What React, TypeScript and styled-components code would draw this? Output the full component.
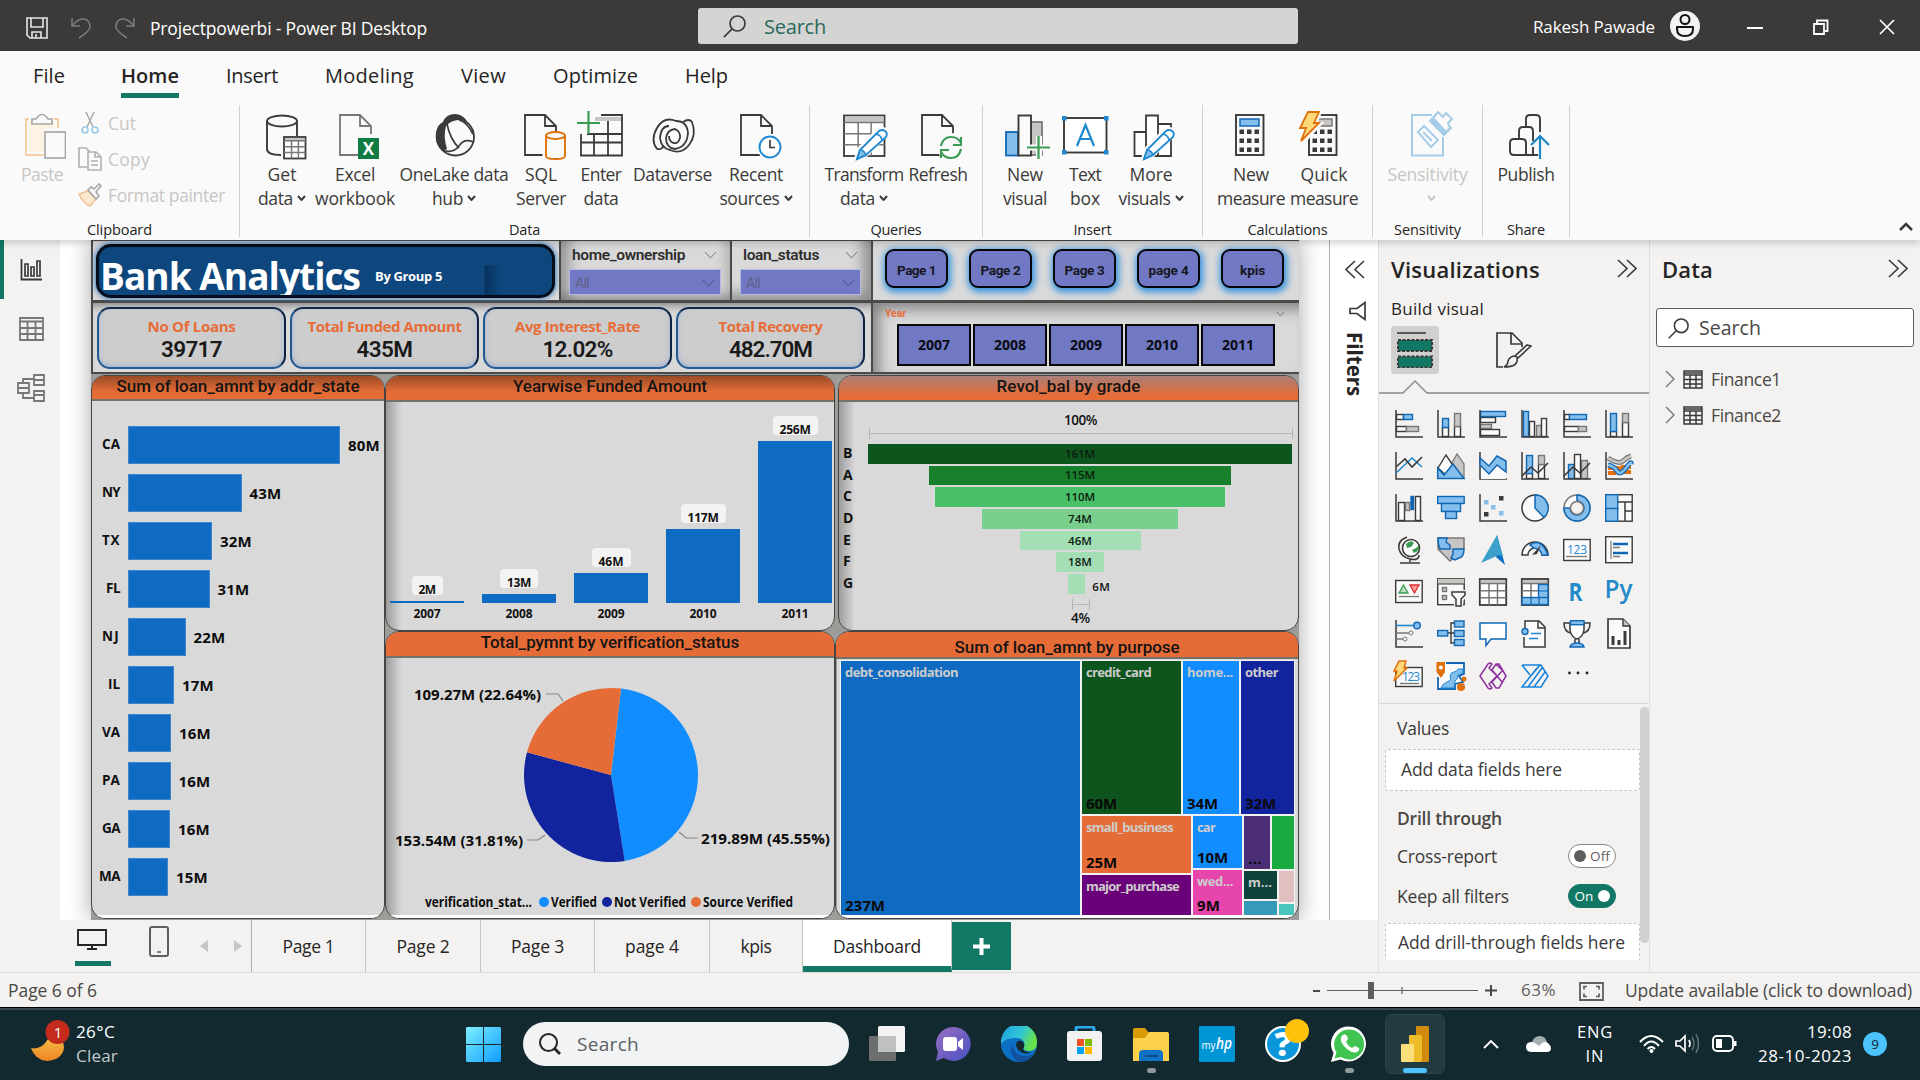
import React, { useLayoutEffect, useRef, useState } from 'react';
import styled, { createGlobalStyle, css } from 'styled-components';

const UI = `"Open Sans", "Noto Sans", sans-serif`;
const DIN = `Roboto, "Liberation Sans", sans-serif`;
const GREEN = '#117865';
const ORANGE = '#e66c37';
const BLUE = '#0f6bc1';
const PURPLE = '#7179c4';

const Global = createGlobalStyle`
  * { box-sizing: border-box; }
  body { margin: 0; background: #f3f2f1; font-family: ${UI}; overflow: hidden; }
  svg { display: block; flex: none; }
`;

/* ---------- text ---------- */

interface LabelProps { $size?: number; $weight?: number; $color?: string; $font?: string; $line?: number; $up?: number }
const Label = styled.span<LabelProps>`
  display: inline-block;
  flex: none;
  white-space: pre;
  font-family: ${p => p.$font ?? UI};
  font-size: ${p => p.$size ?? 18}px;
  font-weight: ${p => p.$weight ?? 400};
  color: ${p => p.$color ?? '#252423'};
  line-height: ${p => p.$line ?? 24}px;
  ${p => p.$up && css`margin-top: ${-p.$up}px;`}
`;

interface TxtProps { w?: number; s?: number; b?: number; c?: string; f?: string; lh?: number; up?: number; children: string }
/** Text tracked in or out so that it fills a given width. */
function Txt({ w, s, b, c, f, lh, up, children }: TxtProps) {
  const ref = useRef<HTMLSpanElement>(null);
  const [track, setTrack] = useState<number | undefined>();
  useLayoutEffect(() => {
    if (!w || !ref.current || track !== undefined) return;
    const range = document.createRange();
    range.selectNodeContents(ref.current);
    setTrack((w + 1 - range.getBoundingClientRect().width) / children.length);
  }, [w, children, track]);
  return (
    <Label ref={ref} $size={s} $weight={b} $color={c} $font={f} $line={lh} $up={up} style={{ letterSpacing: track }}>
      {children}
    </Label>
  );
}

/* ---------- shell ---------- */

const App_ = styled.div`
  width: 1920px;
  height: 1080px;
  display: flex;
  flex-direction: column;
  background: #f3f2f1;
`;
const TitleBar = styled.header`
  height: 51px;
  flex: none;
  display: grid;
  grid-template-columns: 698px 600px 1fr;
  background: #3b3a38;
`;
const TitleLeft = styled.div`
  display: flex;
  align-items: center;
  padding: 4px 0 0 26px;
`;
const QuickIcon = styled.div<{ $w: number }>`
  width: ${p => p.$w}px;
`;
const TitleSearch = styled.div`
  margin: 8px 0 7px;
  display: flex;
  align-items: center;
  gap: 18px;
  padding-left: 25px;
  border-radius: 3px;
  background: #d4d4d2;
`;
const TitleRight = styled.div`
  display: flex;
  align-items: center;
  padding-left: 235px;
`;
const Avatar = styled.div`
  width: 30px;
  height: 30px;
  margin: 0 47px 0 15px;
`;
const WinIcon = styled.div`
  width: 66px;
  padding-top: 3px;
`;

const Tabs = styled.nav`
  height: 54px;
  flex: none;
  display: flex;
  gap: 47px;
  padding: 12px 0 0 33px;
  background: #fafafa;
  position: relative;
  z-index: 6;
`;
const Tab = styled.div<{ $active?: boolean }>`
  height: 35px;
  ${p => p.$active && css`margin-left: 9px; border-bottom: 5px solid ${GREEN};`}
`;

const Ribbon = styled.section`
  height: 135px;
  flex: none;
  display: flex;
  position: relative;
  z-index: 5;
  background: #fafafa;
  box-shadow: 0 2px 8px rgba(0, 0, 0, 0.22);
`;
const Group = styled.div<{ $w: number }>`
  width: ${p => p.$w}px;
  height: 132px;
  border-right: 1px solid #d2d0ce;
  display: flex;
  flex-direction: column;
  justify-content: space-between;
`;
const GroupBody = styled.div<{ $pad?: number }>`
  display: flex;
  padding-left: ${p => p.$pad ?? 0}px;
`;
const GroupName = styled.div`
  display: flex;
  justify-content: center;
  height: 16px;
`;
const Btn = styled.div<{ $w: number }>`
  width: ${p => p.$w}px;
  display: flex;
  flex-direction: column;
  align-items: center;
  padding-top: 7px;
`;
const BtnText = styled.div`
  margin-top: 2px;
  display: flex;
  flex-direction: column;
  align-items: center;
`;
const Line = styled.div`
  display: flex;
  align-items: center;
  gap: 4px;
`;
const ClipList = styled.div`
  display: flex;
  flex-direction: column;
  padding: 0 0 0 2px;
`;
const ClipItem = styled.div`
  height: 36px;
  display: flex;
  align-items: center;
  gap: 6px;
`;
const Collapse = styled.div`
  margin: 117px 7px 0 auto;
`;

const Workspace = styled.main`
  height: 732px;
  flex: none;
  display: grid;
  grid-template-columns: 1378px 271px 271px;
`;
const LeftArea = styled.div`
  display: flex;
  flex-direction: column;
`;
const Upper = styled.div`
  height: 680px;
  display: grid;
  grid-template-columns: 60px 1269px 49px;
`;
const Rail = styled.aside`
  background: #f3f2f1;
`;
const RailItem = styled.div<{ $active?: boolean }>`
  height: 59px;
  display: flex;
  align-items: center;
  justify-content: center;
  padding-left: 2px;
  ${p => p.$active && css`border-left: 4px solid ${GREEN}; padding: 0 3px 0 0;`}
`;
const Canvas = styled.div`
  background: #fff;
  padding-left: 31px;
  overflow: hidden;
`;
const FilterPane = styled.aside`
  border-left: 1px solid #b3b0ad;
  background: #fff;
  display: flex;
  flex-direction: column;
  align-items: flex-start;
  padding: 20px 0 0 15px;
`;
const FunnelIcon = styled.div`
  margin: 22px 0 0 4px;
`;
const VerticalName = styled.div`
  writing-mode: vertical-rl;
  margin: 11px 0 0 -3px;
`;

/* ---------- report page ---------- */

const Report = styled.div`
  width: 1208px;
  height: 680px;
  display: flex;
  flex-direction: column;
  background: #9d9c99;
  box-shadow: 0 0 22px rgba(0, 0, 0, 0.35);
`;
const TopRow = styled.div`
  height: 62px;
  display: grid;
  grid-template-columns: 468px 171px 141px 428px;
`;
const Tile = styled.div<{ $shade?: string }>`
  border: 2px solid #4a4a49;
  border-top-width: 1px;
  border-right-width: 0;
  background: #d9d9d9;
  ${p => p.$shade && css`box-shadow: ${p.$shade};`}
`;
const Banner = styled.div`
  margin: 3px 4px 0 3px;
  height: 54px;
  display: flex;
  align-items: center;
  gap: 15px;
  padding: 10px 0 0 1px;
  border: 3px solid #050d18;
  border-radius: 15px;
  background: linear-gradient(90deg, transparent 385px, rgba(0, 15, 40, 0.38) 386px, transparent 402px) no-repeat 0 100% / 100% 30px, #0d477e;
  box-shadow: 0 0 5px 1px #3c7db8;
  overflow: hidden;
`;
const SlicerHead = styled.div`
  height: 28px;
  display: flex;
  align-items: center;
  justify-content: space-between;
  padding: 0 13px 0 11px;
`;
const Dropdown = styled.div<{ $r: number }>`
  height: 26px;
  margin: 0 ${p => p.$r}px 0 8px;
  display: flex;
  align-items: center;
  justify-content: space-between;
  padding: 2px 5px 0 5px;
  background: ${PURPLE};
  border: 1px solid #b4b8e6;
`;
const NavRow = styled.div`
  display: flex;
  gap: 21px;
  padding: 8px 0 0 12px;
`;
const NavBtn = styled.div`
  width: 63px;
  height: 39px;
  display: flex;
  align-items: center;
  justify-content: center;
  padding-top: 2px;
  border: 2px solid #04060c;
  border-radius: 9px;
  background: ${PURPLE};
  box-shadow: 1px 2px 7px 2px #3391e0;
`;
const KpiRow = styled.div`
  height: 72px;
  display: grid;
  grid-template-columns: 780px 428px;
`;
const Kpis = styled.div`
  display: flex;
  gap: 4px;
  padding: 4px 0 0 4px;
`;
const Kpi = styled.div`
  width: 189px;
  height: 62px;
  display: flex;
  flex-direction: column;
  align-items: center;
  padding-top: 6px;
  border: 2px solid;
  border-color: #12284a #0e2140 #225b95 #1f578f;
  border-radius: 13px;
  background: #cdcdcd;
  box-shadow: inset 0 -2px 5px rgba(120, 150, 215, 0.45);
`;
const YearHead = styled.div`
  height: 21px;
  display: flex;
  align-items: center;
  justify-content: space-between;
  padding: 1px 14px 0 12px;
`;
const YearRow = styled.div`
  display: flex;
  gap: 2px;
  padding-left: 24px;
`;
const YearBtn = styled.div`
  width: 74px;
  height: 42px;
  display: flex;
  align-items: center;
  justify-content: center;
  border: 2px solid #07070c;
  background: ${PURPLE};
`;
const Charts = styled.div`
  flex: 1;
  display: flex;
  padding-top: 1px;
`;
const RightCharts = styled.div`
  display: flex;
  flex-direction: column;
`;
const ChartRow = styled.div<{ $gap: number }>`
  display: flex;
  gap: ${p => p.$gap}px;
`;
const Panel = styled.div<{ $w: number; $h: number }>`
  width: ${p => p.$w}px;
  height: ${p => p.$h}px;
  flex: none;
  border: 1px solid #454544;
  border-radius: 14px;
  background: #d9d9d9;
  overflow: hidden;
  display: flex;
  flex-direction: column;
`;
const PanelHead = styled.div<{ $h: number; $pt?: number; $shade?: boolean; $cool?: boolean }>`
  height: ${p => p.$h}px;
  flex: none;
  display: flex;
  justify-content: center;
  padding-top: ${p => p.$pt ?? 0}px;
  background: ${ORANGE};
  border-bottom: 2px solid #77716c;
  ${p => p.$shade && css`background-image: linear-gradient(180deg, rgba(60, 35, 20, 0.45), transparent 16px);`}
  ${p => p.$cool && css`background-image: linear-gradient(180deg, rgba(110, 145, 185, 0.5), transparent 20px);`}
`;
const PanelBody = styled.div<{ $shade?: boolean }>`
  flex: 1;
  min-height: 0;
  ${p => p.$shade && css`background: linear-gradient(90deg, rgba(0, 0, 0, 0.28), transparent 16px);`}
`;
const WhiteFoot = styled.div`
  height: 3px;
  flex: none;
  background: #fff;
`;

const BarList = styled.div`
  display: flex;
  flex-direction: column;
  gap: 10px;
  padding-top: 25px;
`;
const BarRow = styled.div`
  height: 38px;
  display: grid;
  grid-template-columns: 28px 1fr;
  column-gap: 8px;
  align-items: center;
`;
const BarCat = styled.div`
  display: flex;
  justify-content: flex-end;
`;
const BarTrack = styled.div`
  display: flex;
  align-items: center;
  gap: 8px;
`;
const Bar = styled.div`
  height: 38px;
  background: ${BLUE};
  border: 1px solid #3f86cb;
`;
const Columns = styled.div`
  height: 223px;
  display: flex;
  gap: 18px;
  padding: 0 0 0 4px;
`;
const Column = styled.div`
  width: 74px;
  flex: none;
  display: flex;
  flex-direction: column;
  align-items: center;
  justify-content: flex-end;
`;
const Pill = styled.div`
  height: 19px;
  padding: 1px 7px 0;
  margin-bottom: 6px;
  border-radius: 4px;
  background: #f3f3f3;
`;
const ColBar = styled.div`
  width: 74px;
  flex: none;
  background: ${BLUE};
`;
const ColCat = styled.div`
  height: 22px;
  flex: none;
  display: flex;
  align-items: center;
`;
const Funnel = styled.div`
  display: flex;
  flex-direction: column;
  align-items: center;
  padding-top: 10px;
`;
const Shift = styled.div`
  display: flex;
  margin-left: 24px;
`;
const Steps = styled.div`
  width: 100%;
  margin: 5px 0 3px;
`;
const Step = styled.div`
  height: 21.7px;
  display: grid;
  grid-template-columns: 22px 430px;
  padding-left: 4px;
`;
const StepMid = styled.div`
  display: flex;
  justify-content: center;
  padding-top: 0;
`;
const StepBar = styled.div<{ $c: string }>`
  height: 19.5px;
  display: flex;
  align-items: center;
  justify-content: center;
  background: ${p => p.$c};
`;
const Outside = styled.div`
  width: 0;
  padding-left: 7px;
`;
const Bracket = styled.div<{ $w: number }>`
  width: ${p => p.$w}px;
  height: 11px;
  border: solid #b3b1ae;
  border-width: 0 1px;
  background: linear-gradient(#b9b7b4, #b9b7b4) no-repeat 0 5px / 100% 1px;
`;

const TreeMap = styled.div`
  height: 257px;
  display: flex;
  gap: 2px;
  padding: 2px 4px 0 4px;
  border-left: 1px solid #999;
`;
const TCol = styled.div<{ $w?: number }>`
  ${p => (p.$w ? css`width: ${p.$w}px; flex: none;` : css`flex: 1; min-width: 0;`)}
  display: flex;
  flex-direction: column;
  gap: 2px;
`;
const TRow = styled.div<{ $h?: number }>`
  ${p => (p.$h ? css`height: ${p.$h}px; flex: none;` : css`flex: 1; min-height: 0;`)}
  display: flex;
  gap: 2px;
`;
const Cell = styled.div<{ $c: string; $w?: number; $h?: number }>`
  ${p => p.$w && css`width: ${p.$w}px; flex: none;`}
  ${p => p.$h && css`height: ${p.$h}px; flex: none;`}
  ${p => !p.$w && !p.$h && css`flex: 1; min-width: 0; min-height: 0;`}
  display: flex;
  flex-direction: column;
  justify-content: space-between;
  padding: 1px 0 1px 4px;
  background: ${p => p.$c};
  outline: 1px solid rgba(255, 255, 255, 0.65);
  overflow: hidden;
`;

/* ---------- page tabs and status ---------- */

const PageTabs = styled.div`
  height: 52px;
  display: flex;
  background: #f3f2f1;
`;
const ViewToggles = styled.div`
  width: 252px;
  display: flex;
  align-items: flex-start;
  padding: 6px 0 0 75px;
  border-right: 1px solid #b3b0ad;
`;
const DesktopToggle = styled.div`
  width: 36px;
  height: 40px;
  display: flex;
  justify-content: center;
  padding: 2px 2px 0 0;
  margin-right: 38px;
  background: linear-gradient(${GREEN}, ${GREEN}) no-repeat 0 100% / 100% 5px;
`;
const PageArrow = styled.div<{ $m: number }>`
  margin: 14px 0 0 ${p => p.$m}px;
`;
const PageTab = styled.div<{ $w: number; $active?: boolean }>`
  width: ${p => p.$w}px;
  display: flex;
  justify-content: center;
  padding-top: 14px;
  border-right: 1px solid #c8c6c4;
  ${p => p.$active && css`background: #fff; border-bottom: 6px solid ${GREEN};`}
`;
const AddPage = styled.div`
  width: 59px;
  height: 48px;
  margin-top: 2px;
  display: flex;
  align-items: center;
  justify-content: center;
  background: ${GREEN};
`;
const Status = styled.footer`
  height: 36px;
  flex: none;
  display: flex;
  align-items: center;
  padding: 0 8px;
  border-top: 1px solid #e1dfdd;
  border-bottom: 1px solid #000;
  background: #f3f2f1;
`;
const ZoomArea = styled.div`
  margin: 0 24px 0 auto;
`;
const FitIcon = styled.div`
  margin: 3px 21px 0 23px;
`;

/* ---------- right panes ---------- */

const Pane = styled.aside`
  border-left: 1px solid #e1dfdd;
  background: #f3f2f1;
  overflow: hidden;
`;
const PaneHead = styled.div`
  height: 53px;
  display: flex;
  align-items: center;
  justify-content: space-between;
  padding: 4px 12px 0 12px;
`;
const BuildName = styled.div`
  padding: 4px 0 0 12px;
  height: 33px;
`;
const Modes = styled.div`
  height: 54px;
  display: flex;
  gap: 51px;
  padding-left: 12px;
`;
const Mode = styled.div<{ $on?: boolean }>`
  width: 48px;
  height: 48px;
  display: flex;
  align-items: center;
  justify-content: center;
  border-radius: 3px;
  ${p => p.$on && css`background: #d2d0ce;`}
`;
const IconGrid = styled.div`
  height: 310px;
  display: grid;
  grid-template-columns: repeat(6, 28px);
  grid-auto-rows: 28px;
  gap: 14px;
  padding: 16px 0 0 16px;
  border-bottom: 1px solid #d9d7d5;
`;
const Fields = styled.div`
  display: grid;
  grid-template-columns: 255px 9px;
  padding: 3px 0 0 6px;
`;
const Thumb = styled.div`
  height: 236px;
  border-radius: 5px;
  background: #d2d0ce;
`;
const FieldName = styled.div<{ $h: number; $pt: number }>`
  height: ${p => p.$h}px;
  padding: ${p => p.$pt}px 0 0 12px;
`;
const Well = styled.div<{ $cut?: boolean }>`
  height: ${p => (p.$cut ? 37 : 42)}px;
  display: flex;
  align-items: center;
  padding: 0 0 2px ${p => (p.$cut ? 12 : 15)}px;
  border: 1px dashed #c8c6c4;
  border-radius: 3px;
  background: #fff;
  ${p => p.$cut && css`border-bottom: 0; padding-top: 2px; border-radius: 3px 3px 0 0;`}
`;
const SwitchRow = styled.div`
  height: 40px;
  display: flex;
  align-items: center;
  justify-content: space-between;
  padding: 0 24px 0 12px;
`;
const Switch = styled.div<{ $on?: boolean }>`
  width: 48px;
  height: 24px;
  display: flex;
  align-items: center;
  justify-content: center;
  gap: 4px;
  border-radius: 12px;
  border: 1px solid ${p => (p.$on ? GREEN : '#8a8886')};
  background: ${p => (p.$on ? GREEN : '#fff')};
`;
const Knob = styled.div<{ $on?: boolean }>`
  width: 12px;
  height: 12px;
  border-radius: 50%;
  background: ${p => (p.$on ? '#fff' : '#605e5c')};
`;
const DataSearch = styled.div`
  height: 39px;
  margin: 15px 6px 14px;
  display: flex;
  align-items: center;
  gap: 10px;
  padding: 1px 0 0 11px;
  border: 1px solid #605e5c;
  border-radius: 3px;
  background: #fff;
`;
const TableRow = styled.div`
  height: 36px;
  display: flex;
  align-items: center;
  padding-left: 15px;
  gap: 8px;
`;

/* ---------- taskbar ---------- */

const Taskbar = styled.footer`
  height: 72px;
  flex: none;
  display: flex;
  align-items: center;
  background: #12292f;
  border-top: 2px solid #3a474c;
  padding-bottom: 2px;
`;
const Weather = styled.div`
  width: 466px;
  display: flex;
  gap: 5px;
  padding-left: 30px;
`;
const Stack = styled.div<{ $align?: string }>`
  display: flex;
  flex-direction: column;
  align-items: ${p => p.$align ?? 'flex-start'};
`;
const TaskSearch = styled.div`
  width: 326px;
  height: 44px;
  margin: 0 5px 0 22px;
  display: flex;
  align-items: center;
  gap: 16px;
  padding-left: 16px;
  border-radius: 22px;
  background: #f1f3f5;
`;
const TaskIcon = styled.div<{ $on?: boolean }>`
  width: 60px;
  height: 60px;
  margin: 0 3px;
  display: flex;
  align-items: center;
  justify-content: center;
  position: relative;
  ${p => p.$on && css`background: #223a41; border: 1px solid #2d444a; border-radius: 7px;`}
`;
const RunMark = styled.span<{ $wide?: boolean }>`
  position: absolute;
  bottom: ${p => (p.$wide ? 0 : 1)}px;
  width: ${p => (p.$wide ? 24 : 9)}px;
  height: 5px;
  border-radius: 3px;
  background: ${p => (p.$wide ? '#4cc2ff' : '#8f999c')};
`;
const Tray = styled.div`
  display: flex;
  align-items: center;
  margin-left: 35px;
`;
const TraySlot = styled.div<{ $w: number; $end?: boolean }>`
  width: ${p => p.$w}px;
  flex: none;
  display: flex;
  justify-content: ${p => (p.$end ? 'flex-end' : 'center')};
`;
const Count = styled.div`
  width: 24px;
  height: 24px;
  margin-left: 11px;
  display: flex;
  align-items: center;
  justify-content: center;
  border-radius: 50%;
  background: #4cc2ff;
`;

/* ---------- icons ---------- */

const K = '#3b3a39', B = '#1267b4', L = '#83beec', G = '#797775', C = '#c8c6c4', W = '#fafafa', GR = '#3a9b52';

function Svg({ w, h, vb, children }: { w: number; h: number; vb?: string; children: React.ReactNode }) {
  return <svg width={w} height={h} viewBox={vb ?? `0 0 ${w} ${h}`} fill="none">{children}</svg>;
}
const Chev = ({ w = 9, h = 6, c = K, sw = 2 }: { w?: number; h?: number; c?: string; sw?: number }) => (
  <Svg w={w} h={h}><path d={`M1 1L${w / 2} ${h - 1}L${w - 1} 1`} stroke={c} strokeWidth={sw} /></Svg>
);
const Lens = ({ s, c = K }: { s: number; c?: string }) => (
  <Svg w={s} h={s} vb="0 0 23 23"><circle cx="14.5" cy="8.5" r="7.5" stroke={c} strokeWidth="1.7" /><path d="M9 14L.8 22.2" stroke={c} strokeWidth="1.7" /></Svg>
);
const Page = ({ x = 8, c = K }: { x?: number; c?: string }) => (
  <path d={`M${x + 31} 22V14L${x + 20} 3H${x}V43H${x + 19}M${x + 20} 3V14H${x + 31}`} fill={W} stroke={c} strokeWidth="1.8" />
);
const Pencil = () => (
  <g><path d="M16 47l3-10 20-20q4-1 6 1t1 5L26 43z" fill="#fff" stroke={W} strokeWidth="4" /><path d="M17 47l3-9 19-19q3-2 6 0t1 6L26 43z" fill="#fff" stroke="#1e88d0" strokeWidth="1.8" /><path d="M17 47l3-9q4 0 6 5z" fill={L} stroke="#1e88d0" strokeWidth="1.5" /><path d="M36 22q5 1 6 6" stroke="#1e88d0" strokeWidth="1.5" /></g>
);
const Grid = ({ x, y, w, h, c = K }: { x: number; y: number; w: number; h: number; c?: string }) => (
  <g><rect x={x} y={y} width={w} height={h} fill="#fff" stroke={c} strokeWidth="1.8" /><rect x={x + 1} y={y + 1} width={w - 2} height={h * 0.15} fill={C} />
    <path d={`M${x} ${y + h * 0.17}h${w}M${x} ${y + h * 0.45}h${w}M${x} ${y + h * 0.72}h${w}M${x + w * 0.35} ${y + h * 0.17}v${h * 0.83}M${x + w * 0.67} ${y + h * 0.17}v${h * 0.83}`} stroke={G} strokeWidth="1.5" /></g>
);
const Calc = ({ blue }: { blue?: boolean }) => (
  <g><rect x="9" y="3" width="27.500" height="40" fill={W} stroke={K} strokeWidth="1.9" /><rect x="13" y="7" width="19" height="7" fill={blue ? L : C} stroke={blue ? B : G} strokeWidth="1.5" />
    {[0, 1, 2].map(r => [0, 1, 2].map(q => <rect key={`${r}${q}`} x={12.5 + q * 7.5} y={17.5 + r * 9} width="4.500" height="4.500" fill={K} />))}</g>
);

const ribbon: Record<string, React.ReactNode> = {
  getdata: <><path d="M23 43q-14 0-14-6V9M39 24V9" stroke={K} strokeWidth="1.9" /><ellipse cx="24" cy="9" rx="15" ry="5.500" stroke={K} strokeWidth="1.9" /><Grid x={26} y={25} w={21.5} h={21.5} /></>,
  excel: <><Page x={9} c={G} /><rect x="27" y="26" width="21" height="21" fill="#107c41" /><text x="37.500" y="43" fontSize="17" fontWeight="700" fontFamily={UI} fill="#fff" textAnchor="middle">X</text></>,
  onelake: <><circle cx="25.500" cy="25" r="18.500" fill={W} stroke={K} strokeWidth="1.800" /><path d="M13 10Q16 2 25 2Q32 2 37 9L28 8Q20 9 16 14Q13 24 17 37L13 39Q4 33 6 20Q8 12 13 10z" fill={K} /><path d="M17 12Q20 27 29 36M12 38Q23 42 29 34Q34 26 43 30M29 8Q37 10 43 22" stroke={K} strokeWidth="1.700" /></>,
  sql: <><Page x={8} /><path d="M28 24V44q10 5 20 0V24" fill={W} stroke={W} strokeWidth="5" /><path d="M29 24V44q0 3 9.500 3t9.500-3V24" fill={W} stroke="#e0700a" strokeWidth="1.9" /><ellipse cx="38.500" cy="23.500" rx="9.500" ry="3.500" fill={W} stroke="#e0700a" strokeWidth="1.9" /></>,
  enter: <><path d="M24 3H45V43.500H4V22M10 22h35M4 30.500h41M17 22v21M31 8v35" stroke={K} strokeWidth="1.8" /><path d="M18 5H44V9H18z" fill={C} /><path d="M0 11h23M11.500-1V22" stroke={GR} strokeWidth="2.200" /></>,
  dataverse: <><path d="M8 37Q1 28 8 16T27 9Q38 9 39 21Q38 35 26 37Q17 36 17 26Q18 18 26 17Q32 20 31 26Q29 32 25 31Q20 30 20 24" stroke={K} strokeWidth="1.8" /><path d="M8 37q6 1 6-4M34 10q6-4 9 0q5 13-3 23T21 38Q12 36 11 26Q12 14 20 14" stroke={K} strokeWidth="1.800" /></>,
  recent: <><Page x={9} /><circle cx="38" cy="35" r="13" fill={W} /><circle cx="38" cy="35" r="10.500" fill="#fff" stroke="#1e88d0" strokeWidth="1.900" /><path d="M38 28v7.500h5" stroke={K} strokeWidth="1.700" /></>,
  transform: <><Grid x={4} y={3.5} w={40.5} h={40.5} /><Pencil /></>,
  refresh: <><Page x={8} /><circle cx="37" cy="35" r="14" fill={W} /><path d="M27 34q2-9 10-9q7 0 10 6M47 25v8h-8M47 37q-2 9-10 9q-7 0-10-6M27 46v-8h8" stroke={GR} strokeWidth="2.100" /></>,
  newvisual: <><rect x="5" y="20" width="12" height="23.500" fill={L} stroke={B} strokeWidth="1.800" /><rect x="30" y="10" width="11" height="33" fill={C} stroke={G} strokeWidth="1.800" /><rect x="17.500" y="3.500" width="12.500" height="40" fill={W} stroke={K} strokeWidth="1.900" /><path d="M38 24V48M26 35.500H49" stroke={W} strokeWidth="6" /><path d="M37.500 24V47M26 35.500H49" stroke={GR} strokeWidth="2.200" /></>,
  textbox: <><rect x="3" y="6" width="42.500" height="34.500" fill="#fff" stroke={K} strokeWidth="1.900" /><path d="M16 34L24.500 13L33 34M19 27H30" stroke="#1e88d0" strokeWidth="2.200" />{[1, 43].map(x => [4, 38].map(y => <rect key={`${x}-${y}`} x={x} y={y} width="4.500" height="4.500" fill="#1e88d0" />))}</>,
  more: <><path d="M19 20H7.500V44H19zM19 3.500H31V44H19zM31 12H44V44H31z" fill="#fff" stroke={K} strokeWidth="1.800" /><Pencil /></>,
  measure: <Calc blue />,
  quick: <><Calc /><path d="M8 0H20L15 12H20L2 31L6 17H0z" fill={W} stroke={W} strokeWidth="4" /><path d="M8 0H19L14 11H19L1 29L6 16H0z" fill="#ffd87a" stroke="#e0700a" strokeWidth="1.800" /></>,
  sensitivity: <g stroke="#a5cde8" strokeWidth="2"><path d="M28 3H8V43.500H39V25" /><path d="M14 20l6-6 14 14-7 7zM19 20l9 9" /><path d="M26 9l7-7 14 14-7 7z" fill="#a5cde8" /><path d="M29 6l5-6 5 5 3-4 6 6-4 4 2 5-4 4z" fill={W} /></g>,
  publish: <g stroke={K} strokeWidth="1.900"><path d="M24 15V7Q24 3 28 3H34Q38 3 38 7V20" /><path d="M17 27V19Q17 15 21 15H27Q31 15 31 19V29M31 35V43" /><path d="M36 43H12Q8 43 8 39V31Q8 27 12 27H20Q24 27 24 31V43" /><path d="M38 47V25M29 33L38 24L47 33" stroke="#1e88c4" strokeWidth="2.200" /></g>,
};

const Axis = <path d="M1 0V27H28" stroke={K} strokeWidth="1.500" />;
const R = (x: number, y: number, w: number, h: number, f: string, s: string) => (
  <rect key={`${x},${y},${w}`} x={x + 0.5} y={y + 0.5} width={w} height={h} fill={f} stroke={s} strokeWidth="1.400" />
);
const Sq = (x: number, y: number, f: string) => <rect key={`${x},${y}`} x={x} y={y} width="4.500" height="4.500" fill={f} />;

const viz: React.ReactNode[] = [
  <>{R(1, 4, 7, 5, W, K)}{R(8, 4, 9, 5, L, B)}{R(1, 16, 10, 5, W, K)}{R(11, 16, 12, 5, C, G)}{Axis}</>,
  <>{R(5, 17, 6, 9, W, K)}{R(5, 8, 6, 9, L, B)}{R(17, 16, 6, 10, W, K)}{R(17, 3, 6, 13, C, G)}{Axis}</>,
  <>{R(1, 7, 15, 5, W, K)}{R(1, 1, 25, 5, L, B)}{R(1, 14, 11, 4, C, G)}{R(1, 19, 19, 6, W, K)}{Axis}</>,
  <>{R(2, 1, 5, 25, L, B)}{R(8, 11, 5, 15, W, K)}{R(15, 15, 5, 11, C, G)}{R(20, 8, 5, 18, W, K)}{Axis}</>,
  <>{R(1, 4, 5, 5, W, K)}{R(6, 4, 17, 5, L, B)}{R(1, 16, 14, 5, W, K)}{R(15, 16, 8, 5, C, G)}{Axis}</>,
  <>{R(5, 21, 6, 5, W, K)}{R(5, 3, 6, 18, L, B)}{R(17, 12, 6, 14, W, K)}{R(17, 3, 6, 9, C, G)}{Axis}</>,
  <>{Axis}<path d="M1 21L17 6L27 15" stroke="#1e88d0" strokeWidth="1.600" /><path d="M1 15L10 7L17 15L27 5" stroke={K} strokeWidth="1.600" /></>,
  <><path d="M13 14L20 2L27 12V26z" fill={C} stroke={G} strokeWidth="1.300" /><path d="M1 16L9 3L17 15L10 24z" fill="#fff" stroke={K} strokeWidth="1.400" /><path d="M.7 16L7 23L16 12L27 26.500H.7z" fill={L} stroke={B} strokeWidth="1.500" /></>,
  <>{Axis}<path d="M2 13L10 22L18 14L27 22V27H2z" fill={W} /><path d="M1 6L10 14L18 4L27 9V20L18 13L10 22L1 13z" fill={L} stroke={B} strokeWidth="1.500" /></>,
  <>{R(5, 21, 6, 5, W, K)}{R(5, 3, 6, 18, L, B)}{R(17, 12, 6, 14, W, K)}{R(17, 3, 6, 9, C, G)}{Axis}<path d="M1 24L10 15L17 21L27 11" stroke={K} strokeWidth="1.600" /></>,
  <>{R(5, 12, 6, 14, L, B)}{R(18, 8, 6, 18, C, G)}{R(11, 2, 6, 24, W, K)}{Axis}<path d="M1 24L10 15L17 21L27 11" stroke={K} strokeWidth="1.600" /></>,
  <>{Axis}<path d="M3 16H12V20H26M3 21H10L17 15H26" stroke="#e0700a" strokeWidth="4" /><path d="M3 6Q14 13 18 9T26 4" stroke={G} strokeWidth="5" /><path d="M3 6Q14 13 18 9T26 4" stroke={C} strokeWidth="2.500" /><path d="M3 13Q9 14 12 19T21 16T26 12" stroke={B} strokeWidth="5" /><path d="M3 13Q9 14 12 19T21 16T26 12" stroke={L} strokeWidth="2.500" /></>,
  <>{R(3, 8, 6, 18, W, K)}{R(10, 8, 4, 8, C, G)}{R(15.5, 2, 2.5, 13, B, B)}{R(20, 2, 5, 24, W, K)}{Axis}</>,
  <>{R(0.2, 2, 26.5, 7, L, B)}{R(4, 9, 19, 8, L, B)}{R(8, 17, 11, 7, L, B)}</>,
  <>{Axis}{Sq(5, 6, L)}{Sq(12, 11, L)}{Sq(20, 17, L)}{Sq(20, 2, K)}{Sq(5, 18, K)}</>,
  <><circle cx="14" cy="14" r="13" fill={W} stroke={K} strokeWidth="1.500" /><path d="M14 1A13 13 0 0 1 23 23.500L14 14z" fill={L} stroke={B} strokeWidth="1.500" /></>,
  <><circle cx="14" cy="14" r="13" fill={W} stroke={G} strokeWidth="1.500" /><path d="M14 1A13 13 0 1 1 1 14H7A7 7 0 1 0 14 7z" fill={L} stroke={B} strokeWidth="1.500" /><circle cx="14" cy="14" r="6.500" fill="#f3f2f1" stroke={G} strokeWidth="1.500" /></>,
  <>{R(0.2, 0.2, 26.5, 26.5, W, K)}{R(0.2, 0.2, 12, 14, L, B)}{R(0.2, 14, 12, 12.7, L, B)}<path d="M13 8H27M20 8V27M20 17H27" stroke={K} strokeWidth="1.500" /></>,
  <><circle cx="16" cy="12" r="8.500" fill="#fff" stroke={K} strokeWidth="1.600" /><path d="M11 8q5-5 8-1l-3 4-4 1zM17 14l4-2 3-3q1 6-5 8z" fill={GR} /><path d="M12 1Q2 5 4 13T15 23T24 19M15 23V26M5 27H25" stroke={K} strokeWidth="1.500" /></>,
  <><path d="M1 2H27V12L24 21L17 22L13 25L8 20L1 13z" fill={C} stroke={G} strokeWidth="1.500" /><path d="M1 2H10L9 6L13 9V13H3Q1 8 1 2z" fill={L} stroke={B} strokeWidth="1.500" /><path d="M16 13H27Q27 21 22 22L18 24L14 22L16 18z" fill={L} stroke={B} strokeWidth="1.500" /></>,
  <><path d="M18-1L26 29L17 21z" fill="#0f6fc0" /><path d="M18-1L2 27L20 19L24 20z" fill="#3ca0cb" /></>,
  <><path d="M1 19A13 13 0 0 1 27 19H21A7 7 0 0 0 7 19z" fill={W} stroke={K} strokeWidth="1.500" /><path d="M9 9Q20 1 27 19H21Q20 13 13 12z" fill={L} stroke={B} strokeWidth="1.500" /><path d="M11 19L20 9L16 18z" fill={K} /></>,
  <>{R(0.2, 3, 26.5, 21, W, K)}<text x="14" y="17.500" fontSize="12" fontFamily={UI} fill="#1e88d0" textAnchor="middle" textLength="20">123</text><path d="M3 20.500H24" stroke={G} strokeWidth="1.300" /></>,
  <>{R(0.2, 0.2, 26.5, 26, W, K)}<path d="M6 5V23" stroke={G} strokeWidth="1.200" /><path d="M8 8H23M8 17H23" stroke={B} strokeWidth="2.500" /><path d="M8 11.500H15M8 20.500H15" stroke={G} strokeWidth="1.300" /></>,
  <>{R(0.2, 2, 26.5, 22, W, K)}<path d="M4 15L8.500 7L13 15z" fill="#b7dfc0" stroke={GR} strokeWidth="1.300" /><path d="M15 7H24L19.500 15z" fill="#ff9a9a" stroke="#d92c2c" strokeWidth="1.300" /><path d="M4 18.500H24" stroke={G} strokeWidth="1.300" /></>,
  <>{R(0.2, 0.2, 26.5, 26, W, K)}{R(1, 1, 25, 4, C, C)}<path d="M1 6H27" stroke={K} />{R(5, 9, 4, 4, C, G)}{R(5, 17, 4, 4, C, G)}<path d="M14 14H29V17L24 22V29H19V22L14 17z" fill={W} stroke="#f3f2f1" strokeWidth="4" /><path d="M15 14H28V17L24 21V28H19V21L15 17z" fill={W} stroke={K} strokeWidth="1.500" /></>,
  <Grid x={0.8} y={1} w={26.4} h={26} />,
  <><Grid x={0.8} y={1} w={26.4} h={26} />{R(17, 6, 9.5, 20, L, B)}{R(0.5, 19, 26, 7, L, B)}<path d="M10 19V27M18 19V27M17 13H27" stroke={B} strokeWidth="1.200" /></>,
  <text x="12.500" y="22.500" fontSize="25" fontWeight="700" fontFamily={UI} fill="#2389c8" textAnchor="middle" textLength="14" lengthAdjust="spacingAndGlyphs">R</text>,
  <text x="13.500" y="19.500" fontSize="25" fontWeight="600" fontFamily={UI} fill="#2389c8" textAnchor="middle" textLength="28" lengthAdjust="spacingAndGlyphs">Py</text>,
  <>{Axis}<path d="M1 5.500H19" stroke="#1e88d0" strokeWidth="1.600" /><circle cx="22" cy="5.500" r="3.300" fill={L} stroke={B} strokeWidth="1.400" /><path d="M1 13H14M1 19H8" stroke={G} strokeWidth="1.500" /><circle cx="16" cy="13" r="2" stroke={G} fill={W} /><circle cx="10" cy="19" r="2" stroke={G} fill={W} /></>,
  <><path d="M10 13H18M14 13V3H18M14 13V23H18" stroke={K} strokeWidth="1.400" />{R(0.2, 10, 10, 5.5, L, B)}{R(17, 0.5, 9.5, 6, L, B)}{R(17, 10, 9.5, 6, L, B)}{R(17, 19, 9.5, 6, L, B)}</>,
  <path d="M1 3H27V19H12L7 25.500V19H1z" fill="#fff" stroke={B} strokeWidth="1.500" />,
  <><path d="M4 8V1H18L24 7V27H3V17" fill={W} stroke={K} strokeWidth="1.500" /><path d="M17 1V8H24" stroke={K} strokeWidth="1.500" /><circle cx="4" cy="11.500" r="3" fill={L} stroke={B} strokeWidth="1.400" /><path d="M10 13.500H20M8 18.500H17" stroke="#1e88d0" strokeWidth="1.500" /></>,
  <><path d="M7 3H1Q1 12 8 13M21 3H27Q27 12 20 13" stroke={K} strokeWidth="1.500" /><path d="M7 3V10Q8 17 14 19Q20 17 21 10V3M12 19V23M16 19V23" fill="#fff" stroke={K} strokeWidth="1.500" />{R(7, 0.2, 13.5, 4, L, B)}<path d="M7 27Q8 23 14 23T21 27z" fill={L} stroke={B} strokeWidth="1.500" /></>,
  <><path d="M3-1H18L25 6V28H3z" fill={W} stroke={K} strokeWidth="1.700" /><path d="M18-1V6H25" fill={C} stroke={K} strokeWidth="1.400" /><path d="M8 25V16M14 25V20M20 25V11" stroke={K} strokeWidth="3" /></>,
  <>{R(0.2, 5, 26.5, 19, W, K)}<path d="M4-1H11L9 6H12L-1 19L2 9H-1z" fill="#ffd87a" stroke="#e0700a" strokeWidth="1.500" /><text x="16" y="19" fontSize="12" fontFamily={UI} fill="#1e88d0" textAnchor="middle" textLength="18">123</text><path d="M5 21.500H24" stroke={G} strokeWidth="1.300" /></>,
  <><path d="M9 1H27V12L22 14L26 20L18 22V27H1V15" fill={W} stroke={B} strokeWidth="1.800" /><path d="M26 7H21Q20 10 17 10T13 14Q15 18 10 20T4 26H17L18 19Q22 16 21 13L26 11z" fill={L} stroke="#1e88d0" /><path d="M-.500 0H8V10L4 16L-.500 10z" fill="#e0700a" /><circle cx="3.800" cy="5.500" r="2" fill="#fff" /><circle cx="27" cy="17" r="2.500" fill="#e0700a" /><circle cx="24" cy="25" r="4" fill="#e0700a" /></>,
  <path d="M1 14L9 2Q11 0 13 2L10 6L18 14L10 22L13 26Q11 28 9 26zM13 8L17 2H20L27 14L20 26H17L13 20L24 8M17 2L24 9M13 8L23 20" stroke="#8e2fa0" strokeWidth="1.500" />,
  <path d="M1 3H20L27 14L20 25H1L16 6M1 3L9 13M1 25M13 25L24 10M19 3L9 15M7 25L21 6" stroke="#1482dc" strokeWidth="1.500" />,
  <g fill="#252423"><circle cx="6.500" cy="11" r="1.400" /><circle cx="15" cy="11" r="1.400" /><circle cx="24" cy="11" r="1.400" /></g>,
];

/* ---------- data ---------- */

type Lines = [string, number][];
interface RBtn { icon: string; w: number; lines: Lines; chev?: boolean; off?: boolean }
const groups: { name: string; nw: number; w: number; pad: number; items: RBtn[] }[] = [
  { name: 'Data', nw: 30, w: 570, pad: 7, items: [
    { icon: 'getdata', w: 70, lines: [['Get', 28], ['data', 34]], chev: true },
    { icon: 'excel', w: 76, lines: [['Excel', 39], ['workbook', 79]] },
    { icon: 'onelake', w: 122, lines: [['OneLake data', 108], ['hub', 30]], chev: true },
    { icon: 'sql', w: 52, lines: [['SQL', 31], ['Server', 49]] },
    { icon: 'enter', w: 68, lines: [['Enter', 40], ['data', 34]] },
    { icon: 'dataverse', w: 75, lines: [['Dataverse', 78]] },
    { icon: 'recent', w: 92, lines: [['Recent', 53], ['sources', 59]], chev: true }] },
  { name: 'Queries', nw: 50, w: 173, pad: 12, items: [
    { icon: 'transform', w: 84, lines: [['Transform', 78], ['data', 34]], chev: true },
    { icon: 'refresh', w: 64, lines: [['Refresh', 58]] }] },
  { name: 'Insert', nw: 37, w: 220, pad: 11, items: [
    { icon: 'newvisual', w: 62, lines: [['New', 35], ['visual', 43]] },
    { icon: 'textbox', w: 58, lines: [['Text', 31], ['box', 29]] },
    { icon: 'more', w: 74, lines: [['More', 42], ['visuals', 51]], chev: true }] },
  { name: 'Calculations', nw: 79, w: 170, pad: 10, items: [
    { icon: 'measure', w: 76, lines: [['New', 35], ['measure', 67]] },
    { icon: 'quick', w: 70, lines: [['Quick', 46], ['measure', 67]] }] },
  { name: 'Sensitivity', nw: 66, w: 110, pad: 0, items: [
    { icon: 'sensitivity', w: 109, lines: [['Sensitivity', 79]], chev: true, off: true }] },
  { name: 'Share', nw: 37, w: 87, pad: 0, items: [{ icon: 'publish', w: 86, lines: [['Publish', 56]] }] },
];

const menu: [string, number][] = [['File', 31], ['Home', 57], ['Insert', 51], ['Modeling', 88], ['View', 44], ['Optimize', 84], ['Help', 42]];
const kpis: [string, number, string, number][] = [['No Of Loans', 87, '39717', 60], ['Total Funded Amount', 153, '435M', 55], ['Avg Interest_Rate', 124, '12.02%', 69], ['Total Recovery', 103, '482.70M', 82]];
const states: [string, number, string][] = [['CA', 212, '80M'], ['NY', 113.5, '43M'], ['TX', 84, '32M'], ['FL', 81.5, '31M'], ['NJ', 57.5, '22M'], ['IL', 46, '17M'], ['VA', 43, '16M'], ['PA', 42.5, '16M'], ['GA', 42, '16M'], ['MA', 40, '15M']];
const years: [string, number, string, number][] = [['2007', 2, '2M', 16], ['2008', 9, '13M', 23], ['2009', 30, '46M', 24], ['2010', 74, '117M', 30], ['2011', 162, '256M', 30]];
const grades: [string, number, string, string][] = [['B', 424, '161M', '#0e551d'], ['A', 302, '115M', '#187f2c'], ['C', 290, '110M', '#4abf69'], ['D', 196, '74M', '#7acf8d'], ['E', 121, '46M', '#a3deb5'], ['F', 48, '18M', '#a3deb5'], ['G', 17.5, '6M', '#a3deb5']];
const pageTabs: [string, number, number][] = [['Page 1', 114, 51], ['Page 2', 115, 52], ['Page 3', 114, 52], ['page 4', 115, 53], ['kpis', 93, 30]];

/* ---------- parts ---------- */

function RibbonButton({ b }: { b: RBtn }) {
  const c = b.off ? C : '#3b3a39';
  return (
    <Btn $w={b.w}>
      <svg width="48" height="48" viewBox="0 0 48 48" fill="none" overflow="visible">{ribbon[b.icon]}</svg>
      <BtnText>
        {b.lines.map(([t, w], i) => (
          <Line key={i}><Txt w={w} s={17.5} c={c}>{t}</Txt>{b.chev && i === 1 && <Chev />}</Line>
        ))}
        {b.chev && b.lines.length === 1 && <Line><Label $size={18}> </Label><Chev c={C} /></Line>}
      </BtnText>
    </Btn>
  );
}

function Pie() {
  const cx = 225, cy = 118, r = 87;
  const pt = (deg: number) => [cx + r * Math.sin((deg * Math.PI) / 180), cy - r * Math.cos((deg * Math.PI) / 180)];
  const slice = (a: number, z: number, fill: string) => {
    const [x1, y1] = pt(a), [x2, y2] = pt(z);
    return <path d={`M${cx} ${cy}L${x1} ${y1}A${r} ${r} 0 0 1 ${x2} ${y2}z`} fill={fill} />;
  };
  const t = { fontFamily: UI, fontSize: 15, fontWeight: 700, fill: '#0c0c0c', lengthAdjust: 'spacingAndGlyphs' as const };
  const l = { ...t, fontSize: 13.5, fontWeight: 700 };
  return (
    <svg width="448" height="258" viewBox="0 1 448 258" fill="none">
      {slice(6.6, 170.9, '#118dff')}{slice(170.9, 285.1, '#12239e')}{slice(285.1, 366.6, ORANGE)}
      <path d="M160 37H172L177 44M312 181H300L293 175M141 183H152L159 178" stroke="#8a8886" strokeWidth="1.200" />
      <text x="28" y="43" textLength="127" {...t}>109.27M (22.64%)</text>
      <text x="9" y="189" textLength="128" {...t}>153.54M (31.81%)</text>
      <text x="315" y="187" textLength="129" {...t}>219.89M (45.55%)</text>
      <text x="39" y="250" textLength="107" {...l}>verification_stat...</text>
      <circle cx="158" cy="245" r="5" fill="#118dff" /><text x="165" y="250" textLength="46" {...l}>Verified</text>
      <circle cx="221" cy="245" r="5" fill="#12239e" /><text x="228" y="250" textLength="72" {...l}>Not Verified</text>
      <circle cx="310" cy="245" r="5" fill={ORANGE} /><text x="317" y="250" textLength="90" {...l}>Source Verified</text>
    </svg>
  );
}

const Cat = ({ w, children }: { w: number; children: string }) => <Txt w={w} s={13} b={700} c="#ccc" lh={20}>{children}</Txt>;
const Val = ({ w, children }: { w: number; children: string }) => <Txt w={w} s={15} b={700} c="#0a0a0a" lh={19}>{children}</Txt>;

function Tree() {
  return (
    <TreeMap>
      <Cell $c={BLUE} $w={239}><Cat w={112}>debt_consolidation</Cat><Val w={39}>237M</Val></Cell>
      <TCol>
        <TRow $h={153}>
          <Cell $c="#0e551d" $w={99}><Cat w={64}>credit_card</Cat><Val w={30}>60M</Val></Cell>
          <Cell $c="#118dff" $w={56}><Cat w={45}>home...</Cat><Val w={30}>34M</Val></Cell>
          <Cell $c="#12239e"><Cat w={32}>other</Cat><Val w={30}>32M</Val></Cell>
        </TRow>
        <TRow>
          <TCol $w={109}>
            <Cell $c={ORANGE} $h={57}><Cat w={86}>small_business</Cat><Val w={30}>25M</Val></Cell>
            <Cell $c="#6b007b"><Cat w={92}>major_purchase</Cat></Cell>
          </TCol>
          <TCol $w={49}>
            <Cell $c="#118dff" $h={52}><Cat w={17}>car</Cat><Val w={30}>10M</Val></Cell>
            <Cell $c="#e645ab"><Cat w={35}>wed...</Cat><Val w={22}>9M</Val></Cell>
          </TCol>
          <TCol>
            <TRow $h={53}>
              <Cell $c="#4b2d75" $w={26}><span /><Val w={13}>...</Val></Cell>
              <Cell $c="#1aab40" />
            </TRow>
            <TRow>
              <TCol $w={33}><Cell $c="#10423c" $h={28}><Cat w={23}>m...</Cat></Cell><Cell $c="#3599b8" /></TCol>
              <TCol><Cell $c="#dfbfbf" $h={31} /><Cell $c="#4ac5bb" /></TCol>
            </TRow>
          </TCol>
        </TRow>
      </TCol>
    </TreeMap>
  );
}

const Title = ({ w, children }: { w: number; children: string }) => <Txt w={w} s={17} b={500} f={DIN} c="#141414" lh={20}>{children}</Txt>;

function ReportPage() {
  return (
    <Report>
      <TopRow>
        <Tile><Banner><Txt w={259} s={37} b={700} c="#fff" lh={44}>Bank Analytics</Txt><Txt w={66} s={13} b={700} c="#fff" lh={27}>By Group 5</Txt></Banner></Tile>
        <Tile $shade="inset 12px -4px 14px -4px rgba(0,0,0,.32), inset -10px -10px 12px -6px rgba(0,0,0,.2)">
          <SlicerHead><Txt w={112} s={15.5} b={600} f={DIN} c="#2e2d2c">home_ownership</Txt><Chev w={13} h={8} c={G} sw={1} /></SlicerHead>
          <Dropdown $r={9}><Txt w={13} s={14} f={DIN} c="#61618a">All</Txt><Chev w={13} h={8} c="#50507c" sw={1} /></Dropdown>
        </Tile>
        <Tile $shade="inset -14px -12px 14px -6px rgba(0,0,0,.35)">
          <SlicerHead><Txt w={75} s={15.5} b={600} f={DIN} c="#2e2d2c">loan_status</Txt><Chev w={13} h={8} c={G} sw={1} /></SlicerHead>
          <Dropdown $r={10}><Txt w={13} s={14} f={DIN} c="#61618a">All</Txt><Chev w={13} h={8} c="#50507c" sw={1} /></Dropdown>
        </Tile>
        <Tile>
          <NavRow>{([['Page 1', 38], ['Page 2', 39], ['Page 3', 39], ['page 4', 39], ['kpis', 24]] as Lines).map(([t, w]) => <NavBtn key={t}><Txt w={w} s={13.5} b={700} f={DIN} c="#171722">{t}</Txt></NavBtn>)}</NavRow>
        </Tile>
      </TopRow>
      <KpiRow>
        <Tile $shade="inset 0 10px 10px -8px rgba(0,0,0,.45)">
          <Kpis>{kpis.map(([t, w, v, vw]) => (
            <Kpi key={t}><Txt w={w} s={15} b={700} c={ORANGE} lh={22}>{t}</Txt><Txt w={vw} s={22.5} b={600} f={DIN} c="#1a1a1a" lh={24}>{v}</Txt></Kpi>
          ))}</Kpis>
        </Tile>
        <Tile $shade="inset 8px 8px 14px -2px rgba(0,0,0,.4)">
          <YearHead><Txt w={20} s={10.5} b={700} f={DIN} c={ORANGE} lh={16}>Year</Txt><Chev w={9} h={6} c={G} sw={1} /></YearHead>
          <YearRow>{years.map(([y]) => <YearBtn key={y}><Txt w={31} s={14} b={700} c="#0a0a12">{y}</Txt></YearBtn>)}</YearRow>
        </Tile>
      </KpiRow>
      <Charts>
        <Panel $w={294} $h={544}>
          <PanelHead $h={25} $shade><Title w={242}>Sum of loan_amnt by addr_state</Title></PanelHead>
          <PanelBody>
            <BarList>{states.map(([n, w, v]) => (
              <BarRow key={n}>
                <BarCat><Txt s={13.5} b={700} c="#111" up={2} w={n === 'IL' ? 11 : n === 'FL' ? 13 : n === 'MA' ? 20 : 17}>{n}</Txt></BarCat>
                <BarTrack><Bar style={{ width: w }} /><Txt w={31} s={15} b={700} c="#0c0c0c">{v}</Txt></BarTrack>
              </BarRow>
            ))}</BarList>
          </PanelBody>
          <WhiteFoot />
        </Panel>
        <RightCharts>
          <ChartRow $gap={3}>
            <Panel $w={450} $h={256}>
              <PanelHead $h={26} $shade><Title w={193}>Yearwise Funded Amount</Title></PanelHead>
              <PanelBody $shade>
                <Columns>{years.map(([y, h, v, w]) => (
                  <Column key={y}>
                    <Pill><Txt w={w} s={12} b={700} c="#111" lh={18}>{v}</Txt></Pill>
                    <ColBar style={{ height: h }} />
                    <ColCat><Txt w={26} s={12} b={700} c="#111" lh={20}>{y}</Txt></ColCat>
                  </Column>
                ))}</Columns>
              </PanelBody>
            </Panel>
            <Panel $w={461} $h={256}>
              <PanelHead $h={26} $cool><Title w={143}>Revol_bal by grade</Title></PanelHead>
              <PanelBody $shade>
                <Funnel>
                  <Shift><Txt w={32} s={13.5} b={600} c="#111" lh={16}>100%</Txt></Shift>
                  <Shift><Bracket $w={424} /></Shift>
                  <Steps>{grades.map(([g, w, v, c]) => (
                    <Step key={g}>
                      <Txt s={14} b={700} c="#111" lh={18}>{g}</Txt>
                      <StepMid>
                        <StepBar $c={c} style={{ width: w }}>{w > 20 && <Txt w={v.length > 3 ? 29 : 23} s={11.5} b={600} c="#0b1a0d" lh={20}>{v}</Txt>}</StepBar>
                        {w <= 20 && <Outside><Txt w={17} s={11.5} b={600} c="#111" lh={20}>{v}</Txt></Outside>}
                      </StepMid>
                    </Step>
                  ))}</Steps>
                  <Shift><Bracket $w={18} /></Shift>
                  <Shift><Txt w={18} s={13.5} b={600} c="#111" lh={17}>4%</Txt></Shift>
                </Funnel>
              </PanelBody>
            </Panel>
          </ChartRow>
          <ChartRow $gap={0}>
            <Panel $w={450} $h={288}>
              <PanelHead $h={26}><Title w={257}>Total_pymnt by verification_status</Title></PanelHead>
              <PanelBody $shade><Pie /></PanelBody>
              <WhiteFoot />
            </Panel>
            <Panel $w={464} $h={288}>
              <PanelHead $h={27} $pt={5}><Title w={224}>Sum of loan_amnt by purpose</Title></PanelHead>
              <PanelBody><Tree /></PanelBody>
              <WhiteFoot />
            </Panel>
          </ChartRow>
        </RightCharts>
      </Charts>
    </Report>
  );
}

const DblChev = ({ left }: { left?: boolean }) => (
  <Svg w={20} h={19}><path d={left ? 'M10 1L1 9.5L10 18M19 1L10 9.500L19 18' : 'M1 1L10 9.500L1 18M10 1L19 9.500L10 18'} stroke={K} strokeWidth="1.600" /></Svg>
);

const taskIcons: { el: React.ReactNode; run?: boolean; on?: boolean }[] = [
  { el: <Svg w={36} h={36}><rect x="9" y="0" width="27" height="26" rx="1.500" fill="#f4f4f4" /><rect x="0" y="10" width="27" height="25" rx="1.500" fill="#6c6f70" /><path d="M9 10H27V26H9z" fill="#bfc1c1" /></Svg> },
  { el: <Svg w={36} h={36}><defs><linearGradient id="chat" x1="0" y1="0" x2="1" y2="1"><stop stopColor="#9b6fc0" /><stop offset="1" stopColor="#4950c4" /></linearGradient></defs><path d="M18 1a17 17 0 1 1-9 31L1 35L3 26A17 17 0 0 1 18 1z" fill="url(#chat)" /><rect x="8" y="11" width="14" height="14" rx="3" fill="#fff" /><path d="M23 16L28 12V24L23 20z" fill="#fff" /></Svg> },
  { el: <Svg w={36} h={36}><defs><linearGradient id="edge" x1="0" y1="0" x2="1" y2=".4"><stop stopColor="#1b9de2" /><stop offset=".6" stopColor="#32c6d4" /><stop offset="1" stopColor="#66e24a" /></linearGradient></defs><circle cx="18" cy="18" r="18" fill="#0c6fc4" /><path d="M0 15A18 18 0 0 1 36 17Q36 25 28 25Q21 25 23 21Q25 13 16 12Q5 11 0 18z" fill="url(#edge)" /><path d="M12 19Q13 31 26 30Q30 30 33 27Q28 36 18 36Q11 32 10 24Q10 21 12 19z" fill="#124f9c" /><path d="M15 18q1-4 6-3q4 3 1 8q2 4 8 3q-5 3-10 0t-5-8z" fill="#12292f" /></Svg> },
  { el: <Svg w={36} h={36}><path d="M9 8V2.500Q9 1 11 1H25Q27 1 27 2.500V8" stroke="#2ea8e8" strokeWidth="3" /><rect x="0" y="5" width="35" height="30" rx="3" fill="#f2f2f2" /><rect x="10" y="13" width="7" height="7" fill="#f25022" /><rect x="18" y="13" width="7" height="7" fill="#7fba00" /><rect x="10" y="21" width="7" height="7" fill="#00a4ef" /><rect x="18" y="21" width="7" height="7" fill="#ffb900" /></Svg> },
  { el: <Svg w={36} h={36}><path d="M0 4Q0 2 2 2H12L16 7H33V20H0z" fill="#d99b06" /><path d="M0 12H12L16 6H34Q36 6 36 8V35H0z" fill="#ffd04c" /><path d="M6 35V28Q6 24 10 24H26Q30 24 30 28V35z" fill="#1272c4" /><path d="M12 30H25" stroke="#0b4a88" strokeWidth="2" /></Svg>, run: true },
  { el: <Svg w={36} h={36}><rect width="36" height="36" rx="1" fill="#0096d6" /><text x="2.500" y="22.500" fontSize="11" fontFamily={UI} fill="#fff" textLength="14" lengthAdjust="spacingAndGlyphs">my</text><text x="17" y="22.500" fontSize="16" fontWeight="600" fontStyle="italic" fontFamily={UI} fill="#fff" textLength="16" lengthAdjust="spacingAndGlyphs">hp</text></Svg> },
  { el: <svg width="36" height="36" viewBox="0 0 36 36" overflow="visible"><circle cx="18" cy="18" r="17" fill="#0a96d8" stroke="#fff" strokeWidth="2" /><text x="18" y="30" fontSize="34" fontWeight="800" fontFamily={UI} fill="#fff" textAnchor="middle">?</text><circle cx="32" cy="5" r="12" fill="#ffc10a" /></svg> },
  { el: <Svg w={36} h={36}><path d="M0 36L2.500 27A17.500 17.500 0 1 1 9.500 33.500z" fill="#fff" /><path d="M3.500 32.500L5.500 26.500A15 15 0 1 1 10 31z" fill="#3fc351" /><path d="M12 9q2-2 4 1l1 3-2 3q2 4 6 6l3-2 4 2q1 2-2 4-4 2-10-3-7-6-6-11 0-2 2-3z" fill="#fff" /></Svg>, run: true },
  { el: <Svg w={28} h={36}><rect x="15" y="0" width="13" height="36" rx="1" fill="#d08a0c" /><rect x="8" y="9" width="13" height="27" rx="1" fill="#eebc2a" /><rect x="0" y="18" width="13" height="18" rx="1" fill="#fbe07a" /></Svg>, on: true },
];

export default function App() {
  return (
    <App_>
      <Global />
      <TitleBar>
        <TitleLeft>
          <QuickIcon $w={44}><Svg w={22} h={22}><path d="M1 1H21V21H4L1 18zM5 1V10H17V1M6 21V15H15V21M10 17V21" stroke="#e6e6e6" strokeWidth="1.600" /></Svg></QuickIcon>
          <QuickIcon $w={44}><Svg w={22} h={22}><path d="M2 1V9H10M2 9Q8 1 14 2T20 10Q20 14 9 21" stroke="#7d7c7a" strokeWidth="1.500" /></Svg></QuickIcon>
          <QuickIcon $w={36}><Svg w={22} h={22}><path d="M20 1V9H12M20 9Q14 1 8 2T2 10Q2 14 13 21" stroke="#7d7c7a" strokeWidth="1.500" /></Svg></QuickIcon>
          <Txt w={276} s={17.5} c="#fff">Projectpowerbi - Power BI Desktop</Txt>
        </TitleLeft>
        <TitleSearch><Lens s={23} /><Txt w={61} s={20} c="#2b685c" up={-2}>Search</Txt></TitleSearch>
        <TitleRight>
          <Txt w={121} s={17} c="#fff" up={-2}>Rakesh Pawade</Txt>
          <Avatar><Svg w={30} h={30}><circle cx="15" cy="15" r="15" fill="#f3f2f1" /><circle cx="15" cy="8.500" r="4.500" stroke="#111" strokeWidth="2" /><path d="M7 16H23V18Q23 25 15 25T7 18z" stroke="#111" strokeWidth="2" strokeLinejoin="round" /></Svg></Avatar>
          <WinIcon><Svg w={16} h={16}><path d="M0 9H16" stroke="#fff" strokeWidth="2" /></Svg></WinIcon>
          <WinIcon><Svg w={16} h={16}><path d="M1 5H11V15H1zM4 4V1.500H14.500V12H12" stroke="#fff" strokeWidth="1.800" /></Svg></WinIcon>
          <WinIcon><Svg w={16} h={16}><path d="M1 1L15 15M15 1L1 15" stroke="#fff" strokeWidth="1.700" /></Svg></WinIcon>
        </TitleRight>
      </TitleBar>
      <Tabs>{menu.map(([t, w]) => <Tab key={t} $active={t === 'Home'}><Txt w={w} s={20} b={t === 'Home' ? 600 : 400} lh={26}>{t}</Txt></Tab>)}</Tabs>
      <Ribbon>
        <Group $w={240}>
          <GroupBody $pad={8}>
            <Btn $w={68}>
              <Svg w={48} h={48}><path d="M11 7H8V43H26M36 7H40V16" stroke="#f5cfa8" strokeWidth="2" /><path d="M11 9V40H26V17H36V9" fill="#fdf3e4" /><path d="M14 12V7H18Q24-2 30 7H34V12z" fill={W} stroke="#a9a7a5" strokeWidth="1.700" /><rect x="27" y="20" width="20.500" height="26" fill={W} stroke="#a9a7a5" strokeWidth="1.700" /></Svg>
              <BtnText><Txt w={41} s={17.5} c={C}>Paste</Txt></BtnText>
            </Btn>
            <ClipList>
              <ClipItem><Svg w={24} h={24}><path d="M8 1L15 16M16 1L9 16" stroke="#a9a7a5" strokeWidth="1.500" /><circle cx="7" cy="19" r="3" stroke="#9ccbe8" strokeWidth="1.700" /><circle cx="17" cy="19" r="3" stroke="#9ccbe8" strokeWidth="1.700" /></Svg><Txt w={27} s={17.5} c={C}>Cut</Txt></ClipItem>
              <ClipItem><Svg w={24} h={24}><path d="M9 20H1V1H8L12 5" stroke="#b3b1af" strokeWidth="1.700" /><path d="M10 5H18L23 10V23H10zM17 5V10H23M13 14H20M13 18H20" fill={W} stroke="#b3b1af" strokeWidth="1.600" /></Svg><Txt w={41} s={17.5} c={C}>Copy</Txt></ClipItem>
              <ClipItem><Svg w={24} h={24}><path d="M1 11L10 8L18 16L12 23Q5 20 1 11z" fill="#fbe9cf" stroke="#f0c498" strokeWidth="1.700" /><path d="M10 7L13 4L16 6L21 1L23 3L18 9L21 13L18 16z" fill={W} stroke="#a9a7a5" strokeWidth="1.600" /></Svg><Txt w={116} s={17.5} c={C}>Format painter</Txt></ClipItem>
            </ClipList>
          </GroupBody>
          <GroupName><Txt w={64} s={14.5} lh={16} up={-1}>Clipboard</Txt></GroupName>
        </Group>
        {groups.map(g => (
          <Group key={g.name} $w={g.w}>
            <GroupBody $pad={g.pad}>{g.items.map((b, i) => <RibbonButton key={i} b={b} />)}</GroupBody>
            <GroupName><Txt w={g.nw} s={14.5} lh={16} up={-1}>{g.name}</Txt></GroupName>
          </Group>
        ))}
        <Collapse><Svg w={14} h={9}><path d="M1 8L7 2L13 8" stroke={K} strokeWidth="2.500" /></Svg></Collapse>
      </Ribbon>
      <Workspace>
        <LeftArea>
          <Upper>
            <Rail>
              <RailItem $active><Svg w={22} h={22}><path d="M1.500 0V20.500H22" stroke={K} strokeWidth="1.800" /><path d="M5 5H8V17H5zM11 8H14V17H11zM17 2H20V17H17z" stroke={K} strokeWidth="1.700" /></Svg></RailItem>
              <RailItem><Svg w={25} h={24}><path d="M1 1H24V23H1zM1 4.500H24M1 11H24M1 17H24M8.500 4.500V23M16.500 4.500V23" stroke={G} strokeWidth="1.800" /></Svg></RailItem>
              <RailItem><Svg w={28} h={28}><path d="M1 9H12V19H1zM1 14H12M17 1H27V11H17zM17 6H27M17 17H27V27H17zM17 21H27M6 9V5H17M6 19V24H17" stroke={G} strokeWidth="1.800" /></Svg></RailItem>
            </Rail>
            <Canvas><ReportPage /></Canvas>
            <FilterPane>
              <DblChev left />
              <FunnelIcon><Svg w={18} h={20}><path d="M16 1.500V18.500L8 12.500H1V7.500H8z" stroke={K} strokeWidth="1.700" /></Svg></FunnelIcon>
              <VerticalName><Label $size={20.5} $weight={700} $line={26}>Filters</Label></VerticalName>
            </FilterPane>
          </Upper>
          <PageTabs>
            <ViewToggles>
              <DesktopToggle><Svg w={30} h={22}><path d="M1 2H29V17H1zM15 17V21M10 21H20" stroke="#252423" strokeWidth="1.900" /></Svg></DesktopToggle>
              <Svg w={20} h={31}><rect x="1" y="1" width="18" height="29" rx="2" stroke="#605e5c" strokeWidth="2" /><path d="M8 26H12" stroke="#605e5c" strokeWidth="1.500" /></Svg>
              <PageArrow $m={31}><Svg w={8} h={12}><path d="M8 0V12L0 6z" fill={C} /></Svg></PageArrow>
              <PageArrow $m={26}><Svg w={8} h={12}><path d="M0 0V12L8 6z" fill={C} /></Svg></PageArrow>
            </ViewToggles>
            {pageTabs.map(([t, w, tw]) => <PageTab key={t} $w={w}><Txt w={tw} s={17.5}>{t}</Txt></PageTab>)}
            <PageTab $w={149} $active><Txt w={87} s={17.5} b={500}>Dashboard</Txt></PageTab>
            <AddPage><Svg w={17} h={17}><path d="M8.500 0V17M0 8.500H17" stroke="#fff" strokeWidth="4" /></Svg></AddPage>
          </PageTabs>
        </LeftArea>
        <Pane>
          <PaneHead><Txt w={148} s={22} b={600} lh={28}>Visualizations</Txt><DblChev /></PaneHead>
          <BuildName><Txt w={92} s={17} b={500}>Build visual</Txt></BuildName>
          <Modes>
            <Mode $on><Svg w={36} h={36}><path d="M0 1H29" stroke={K} strokeWidth="1.600" /><rect x="1" y="8" width="34" height="11" fill={GREEN} stroke={K} strokeWidth="2" strokeDasharray="3 1.500" /><rect x="1" y="24.500" width="34" height="11" fill={GREEN} stroke={K} strokeWidth="2" strokeDasharray="3 1.500" /></Svg></Mode>
            <Mode><Svg w={36} h={36}><path d="M7 35H1V1H16L26 11V15M15 1V12H26" stroke={K} strokeWidth="1.700" /><path d="M35 14L22 26L19 24L31 13zM21 26Q23 35 8 35Q12 33 12 29Q14 24 19 24" stroke={K} strokeWidth="1.600" /></Svg></Mode>
          </Modes>
          <Svg w={270} h={14}><path d="M0 13H24L36 1L48 13H270" stroke="#8a8886" strokeWidth="1.300" /></Svg>
          <IconGrid>{viz.map((v, i) => <svg key={i} width="28" height="28" viewBox="0 0 28 28" fill="none" overflow="visible">{v}</svg>)}</IconGrid>
          <Fields>
            <div>
              <FieldName $h={42} $pt={9}><Txt w={51} s={17.5} c={K}>Values</Txt></FieldName>
              <Well><Txt w={160} s={17.5} c={K}>Add data fields here</Txt></Well>
              <FieldName $h={45} $pt={15}><Txt w={104} s={17.5} b={600} c="#4a4846">Drill through</Txt></FieldName>
              <SwitchRow><Txt w={99} s={17.5} c={K} up={1}>Cross-report</Txt><Switch><Knob /><Txt w={19} s={13.5} c="#605e5c">Off</Txt></Switch></SwitchRow>
              <SwitchRow><Txt w={111} s={17.5} c={K} up={1}>Keep all filters</Txt><Switch $on><Txt w={18} s={13.5} c="#fff">On</Txt><Knob $on /></Switch></SwitchRow>
              <FieldName $h={7} $pt={0} />
              <Well $cut><Txt w={226} s={17.5} c={K}>Add drill-through fields here</Txt></Well>
            </div>
            <Thumb />
          </Fields>
        </Pane>
        <Pane>
          <PaneHead><Txt w={50} s={22} b={600} lh={28}>Data</Txt><DblChev /></PaneHead>
          <DataSearch><Lens s={21} /><Txt w={61} s={19.5} c="#4a4846">Search</Txt></DataSearch>
          {['Finance1', 'Finance2'].map(n => (
            <TableRow key={n}>
              <Svg w={10} h={18}><path d="M1 1L9 9L1 17" stroke={G} strokeWidth="1.400" /></Svg>
              <Svg w={20} h={19}><path d="M1 1H19V18H1zM1 3H19M1 5H19M1 9.500H19M1 14H19M7 5V18M13 5V18" stroke={K} strokeWidth="1.500" /></Svg>
              <Txt w={69} s={17.5} c="#4a4846">{n}</Txt>
            </TableRow>
          ))}
        </Pane>
      </Workspace>
      <Status>
        <Txt w={88} s={17.5} c="#4a4846">Page 6 of 6</Txt>
        <ZoomArea><Svg w={184} h={18}><path d="M0 10H7M172 9.500H184M178 4V15" stroke="#4a4846" strokeWidth="2" /><path d="M14 9.500H165M89 6V13" stroke="#605e5c" strokeWidth="1.200" /><rect x="55" y="1" width="6" height="17" fill="#605e5c" /></Svg></ZoomArea>
        <Txt w={34} s={17} c="#605e5c">63%</Txt>
        <FitIcon><Svg w={25} h={19}><path d="M1 1H24V18H1z" stroke="#605e5c" strokeWidth="1.800" /><path d="M5 7.500V4.500H8M17 4.500H20V7.500M5 11.500V14.500H8M17 14.500H20V11.500" stroke="#605e5c" strokeWidth="1.700" /></Svg></FitIcon>
        <Txt w={286} s={17.5} c="#4a4846">Update available (click to download)</Txt>
      </Status>
      <Taskbar>
        <Weather>
          <Svg w={41} h={48}><defs><linearGradient id="moon" x1="0" y1="0" x2="0" y2="1"><stop stopColor="#f6cf4a" /><stop offset="1" stopColor="#ee8326" /></linearGradient></defs><path d="M1 28Q14 31 22 11Q34 17 34 28Q32 40 17 41Q5 40 1 28z" fill="url(#moon)" /><circle cx="27.500" cy="12" r="12" fill="#c42b1c" /><text x="28" y="17.500" fontSize="15" fontFamily={UI} fill="#fff" textAnchor="middle">1</text></Svg>
          <Stack><Txt w={38} s={17} c="#fff">26°C</Txt><Txt w={41} s={17} c="#c3cacc">Clear</Txt></Stack>
        </Weather>
        <Svg w={35} h={35}><defs><linearGradient id="win" x1="0" y1="0" x2="1" y2="1"><stop stopColor="#7df0ff" /><stop offset="1" stopColor="#109cff" /></linearGradient></defs><path d="M1 0H17V17H0V1zM18 0H34L35 1V17H18zM0 18H17V35H1L0 34zM18 18H35V34L34 35H18z" fill="url(#win)" /></Svg>
        <TaskSearch><Svg w={22} h={22}><circle cx="9.500" cy="9.500" r="8.500" stroke="#252525" strokeWidth="2" /><path d="M15.500 15.500L21 21" stroke="#252525" strokeWidth="2.800" /></Svg><Txt w={61} s={19} c="#5c5f61">Search</Txt></TaskSearch>
        {taskIcons.map((t, i) => <TaskIcon key={i} $on={t.on}>{t.el}{(t.run || t.on) && <RunMark $wide={t.on} />}</TaskIcon>)}
        <Tray>
          <TraySlot $w={16}><Svg w={16} h={10}><path d="M1 9L8 2L15 9" stroke="#fff" strokeWidth="1.900" /></Svg></TraySlot>
          <TraySlot $w={78}><Svg w={25} h={18}><path d="M5 10Q7 1 14 1Q19 1 21 7L12 13z" fill="#a5adb0" /><path d="M6 17Q0 17 0 12Q0 7 6 7Q10 8 13 11Q18 5 22 8Q25 11 25 13Q25 17 21 17z" fill="#fff" /></Svg></TraySlot>
          <TraySlot $w={36}><Stack $align="center"><Txt w={35} s={16.5} c="#fff">ENG</Txt><Txt w={18} s={16.5} c="#fff">IN</Txt></Stack></TraySlot>
          <TraySlot $w={149}>
            <Svg w={98} h={22}><g stroke="#fff" strokeWidth="2"><path d="M1 9Q12-3 24 9M5 13Q12 4 20 13M8.500 16Q12.500 12 16 16" /><path d="M37 8H41L46 3V18L41 13H37z" strokeWidth="1.700" /><path d="M50 7Q52 10.500 50 14" strokeWidth="1.700" /><path d="M53 4Q57 10.500 53 17M57 1Q62 10.500 57 20" stroke="#5f7075" strokeWidth="1.600" /><rect x="74" y="3" width="20" height="15" rx="4" strokeWidth="1.900" /></g><circle cx="12.500" cy="18" r="2" fill="#fff" /><rect x="77" y="6" width="6" height="9" fill="#fff" /><rect x="95" y="8" width="2.500" height="5" fill="#fff" /></Svg>
          </TraySlot>
          <TraySlot $w={90} $end><Stack $align="flex-end"><Txt w={44} s={17} c="#fff">19:08</Txt><Txt w={93} s={17} c="#fff">28-10-2023</Txt></Stack></TraySlot>
          <Count><Txt s={13.5} c="#10262c">9</Txt></Count>
        </Tray>
      </Taskbar>
    </App_>
  );
}
